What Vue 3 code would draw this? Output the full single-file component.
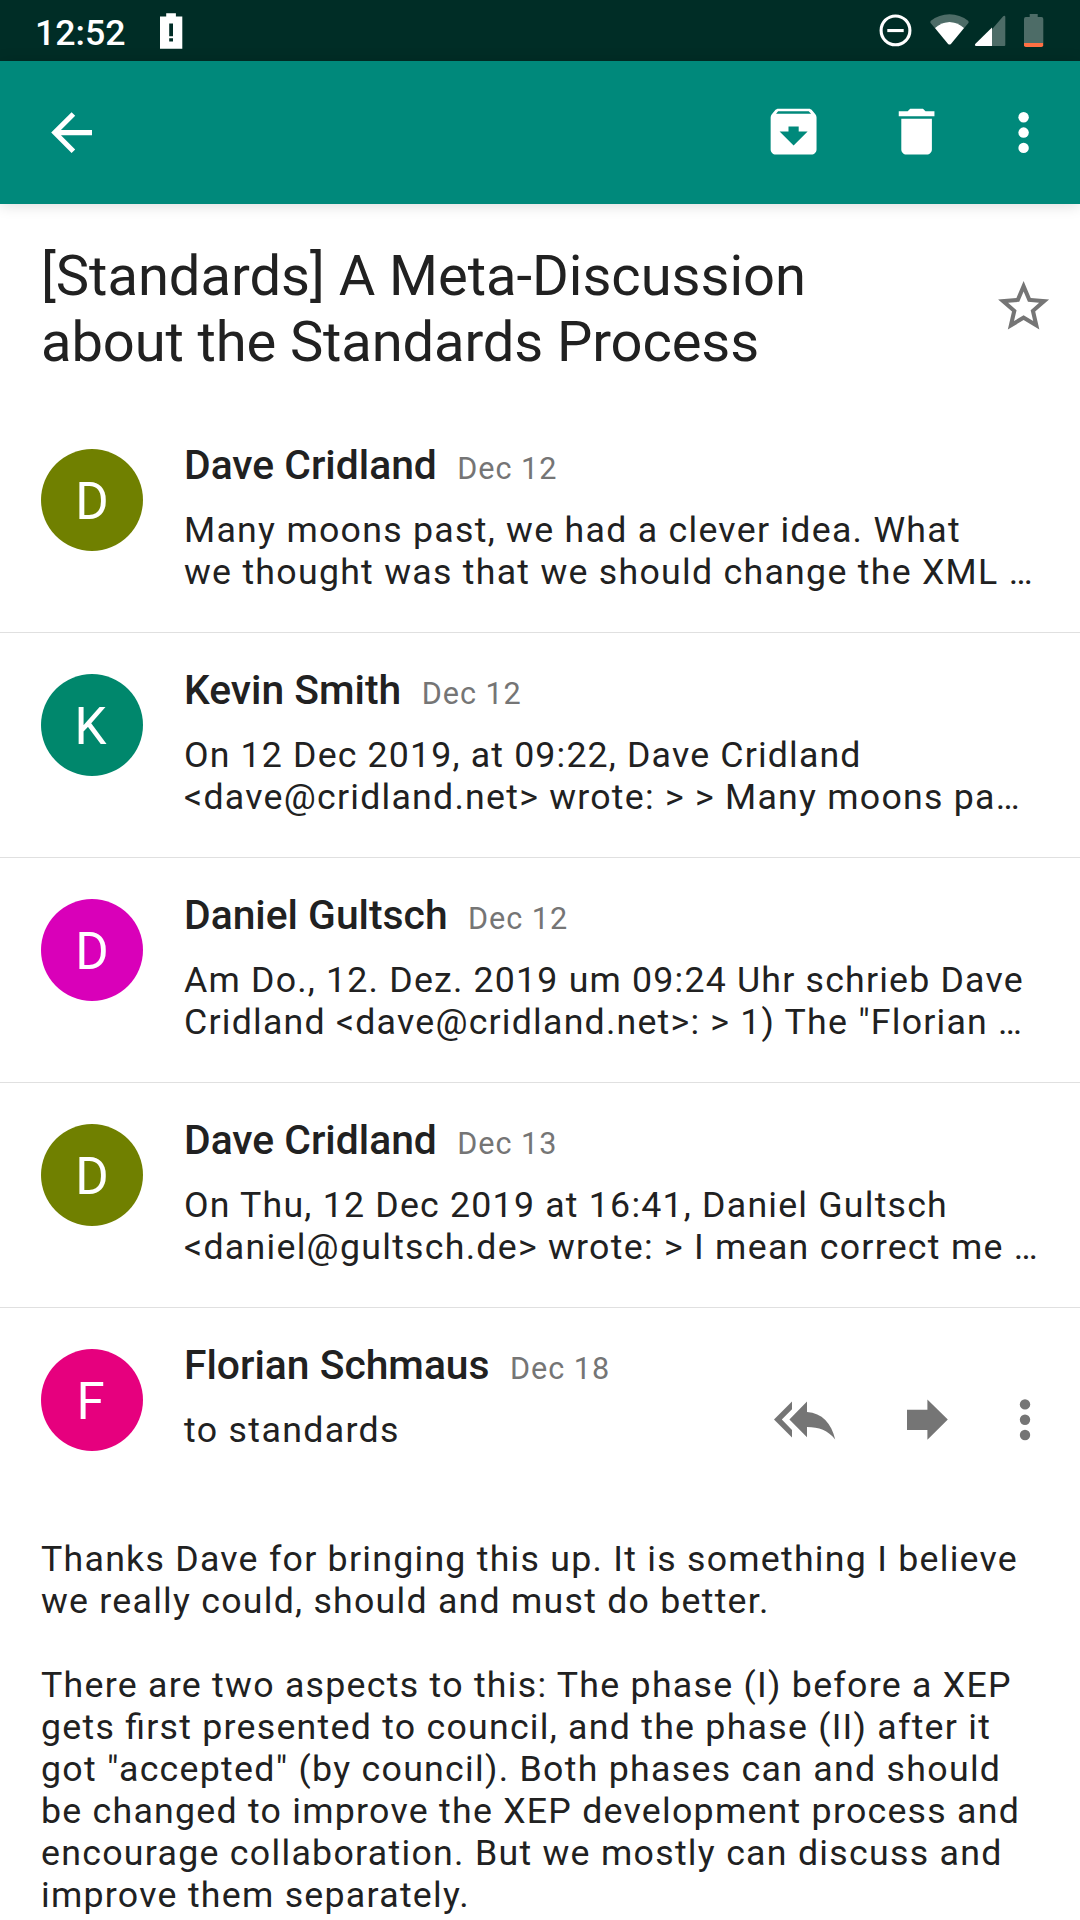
<script setup>
const messages = [
  { id: 1, initial: 'D', color: '#708000', name: 'Dave Cridland', date: 'Dec 12', lines: [
    { text: 'Many moons past, we had a clever idea. What' },
    { text: 'we thought was that we should change the XML …' },
  ] },
  { id: 2, initial: 'K', color: '#00876c', name: 'Kevin Smith', date: 'Dec 12', lines: [
    { text: 'On 12 Dec 2019, at 09:22, Dave Cridland', tracking: 1.165 },
    { text: '<dave@cridland.net> wrote: > > Many moons pa…', tracking: 1.25 },
  ] },
  { id: 3, initial: 'D', color: '#d900b9', name: 'Daniel Gultsch', date: 'Dec 12', lines: [
    { text: 'Am Do., 12. Dez. 2019 um 09:24 Uhr schrieb Dave', tracking: 1.2 },
    { text: 'Cridland <dave@cridland.net>: > 1) The "Florian …', tracking: 1.22 },
  ] },
  { id: 4, initial: 'D', color: '#708000', name: 'Dave Cridland', date: 'Dec 13', lines: [
    { text: 'On Thu, 12 Dec 2019 at 16:41, Daniel Gultsch', tracking: 1.22 },
    { text: '<daniel@gultsch.de> wrote: > I mean correct me …' },
  ] },
  { id: 5, initial: 'F', color: '#e6007e', name: 'Florian Schmaus', date: 'Dec 18', lines: [
    { text: 'to standards', tracking: 1.35 },
  ], open: true },
]

const body = [
  [
    { text: 'Thanks Dave for bringing this up. It is something I believe', tracking: 1.255 },
    { text: 'we really could, should and must do better.', tracking: 1.25 },
  ],
  [
    { text: 'There are two aspects to this: The phase (I) before a XEP' },
    { text: 'gets first presented to council, and the phase (II) after it', tracking: 1.255 },
    { text: 'got "accepted" (by council). Both phases can and should', tracking: 1.29 },
    { text: 'be changed to improve the XEP development process and', tracking: 1.255 },
    { text: 'encourage collaboration. But we mostly can discuss and', tracking: 1.29 },
    { text: 'improve them separately.' },
  ],
]

const track = (line) => ({ letterSpacing: `${line.tracking ?? 1.275}px` })
</script>

<template>
  <div class="screen">
    <div class="status">
      <span class="clock">12:52</span>
      <svg class="alert" width="24" height="37" viewBox="0 0 24 37">
        <path fill="#fff" fill-rule="evenodd" d="M6.2.2h9.7V3.6h6.4v32.2H0V3.6h6.2zM9.2 10.6v12.6h3.8V10.6zM9.2 25.2v3.4h3.8v-3.4z" />
      </svg>
      <svg class="indicators" width="160" height="61" viewBox="0 0 160 61">
        <circle cx="15.5" cy="30.4" r="14.4" fill="none" stroke="#fff" stroke-width="3.1" />
        <path fill="#fff" d="M7.3 29h16.4v3.1H7.3z" />
        <path class="dim" d="M50.9 20.8Q59 14.3 69.5 14.3T88.1 20.8Q89.2 22 88.4 23L84.2 28.1Q77.5 22 69.5 22T54.8 28.1L50.6 23Q49.8 22 50.9 20.8z" />
        <path fill="#fff" d="M54.9 28Q61.5 22 69.5 22T84.1 28L70.9 44q-1.4 1.2-2.8 0z" />
        <path class="dim" d="M112 29.3 123.2 16.2q2.1-1.2 2.1.8v28q0 1-1 1H112z" />
        <path fill="#fff" d="M112 27.5V46H95.8q-1.6-.6-.6-1.9z" />
        <path class="dim" d="M149.7 14h8v3h3.8q1.8.2 1.8 2v24H144V19q0-1.8 1.8-2h3.9z" />
        <path fill="#ff7043" d="M144 43h19.2v2.2q0 1.8-1.8 1.8h-15.6q-1.8 0-1.8-1.8z" />
      </svg>
    </div>

    <header class="appbar">
      <svg class="icon back" viewBox="0 0 24 24"><path d="M20 11H7.83l5.59-5.59L12 4l-8 8 8 8 1.41-1.41L7.83 13H20v-2z" /></svg>
      <svg class="icon raised archive" viewBox="0 0 24 24"><path d="M20.54 5.23l-1.39-1.68C18.88 3.21 18.47 3 18 3H6c-.47 0-.88.21-1.16.55L3.46 5.23C3.17 5.57 3 6.02 3 6.5V19c0 1.1.9 2 2 2h14c1.1 0 2-.9 2-2V6.5c0-.48-.17-.93-.46-1.27zM12 17.5L6.5 12H10v-2h4v2h3.5L12 17.5zM5.12 5l.81-1h12l.94 1H5.12z" /></svg>
      <svg class="icon raised trash" viewBox="0 0 24 24"><path d="M6 19c0 1.1.9 2 2 2h8c1.1 0 2-.9 2-2V7H6v12zM19 4h-3.5l-1-1h-5l-1 1H5v2h14V4z" /></svg>
      <svg class="icon more" viewBox="0 0 24 24"><circle cx="12" cy="6" r="2.05" /><circle cx="12" cy="12" r="2.05" /><circle cx="12" cy="18" r="2.05" /></svg>
    </header>

    <section class="subject">
      <h1><span>[Standards] A Meta-Discussion</span><span class="second">about the Standards Process</span></h1>
      <svg class="icon star" viewBox="0 0 24 24"><path d="M22 9.24l-7.19-.62L12 2 9.19 8.63 2 9.24l5.46 4.73L5.82 21 12 17.27 18.18 21l-1.63-7.03L22 9.24zM12 15.4l-3.76 2.27 1-4.28-3.32-2.88 4.38-.38L12 6.1l1.71 4.04 4.38.38-3.32 2.88 1 4.28L12 15.4z" /></svg>
    </section>

    <article v-for="m in messages" :key="m.id" class="message" :class="{ open: m.open }">
      <div class="avatar" :class="'letter-' + m.initial" :style="{ backgroundColor: m.color }">{{ m.initial }}</div>
      <div class="content">
        <div class="meta">
          <span class="name">{{ m.name }}</span>
          <span class="date">{{ m.date }}</span>
        </div>
        <div class="text">
          <div v-for="line in m.lines" :key="line.text" :style="track(line)">{{ line.text }}</div>
        </div>
      </div>
      <div v-if="m.open" class="actions">
        <svg width="62" height="42" viewBox="0 0 62 42"><path d="M18 2.6v7.6L7.8 20.6 18 31v7.4L0 20.6zM33 2.6v10.3C48 14 57.5 24 61.2 40.5 54 31 45 28 33 27.9v10.4L15.4 20.6z" /></svg>
        <svg width="42" height="42" viewBox="0 0 42 42"><path d="M0 10.7h20.4V.4l20.4 20.2-20.4 20.2V31H0z" /></svg>
        <svg width="12" height="42" viewBox="0 0 12 42"><circle cx="6" cy="5.4" r="5.2" /><circle cx="6" cy="20.7" r="5.2" /><circle cx="6" cy="36" r="5.2" /></svg>
      </div>
    </article>

    <section class="body text">
      <p v-for="(p, i) in body" :key="i">
        <span v-for="line in p" :key="line.text" :style="track(line)">{{ line.text }}</span>
      </p>
    </section>
  </div>
</template>

<style>
body {
  margin: 0;
  background: #fff;
}
</style>

<style scoped>
.screen {
  width: 1080px;
  height: 1920px;
  overflow: hidden;
  display: flex;
  flex-direction: column;
  background: #fff;
  color: #212121;
  font-family: Roboto, "Liberation Sans", sans-serif;
}
.screen > * {
  flex: none;
  box-sizing: border-box;
}
svg {
  display: block;
  flex: none;
}
.status {
  height: 61px;
  display: flex;
  align-items: flex-start;
  background: #002d26;
  color: #fff;
  padding-left: 35px;
}
.clock {
  width: 125px;
  font-size: 35.7px;
  font-weight: 500;
  line-height: 42px;
  padding-top: 12px;
}
.alert {
  margin-top: 13px;
}
.indicators {
  margin-left: auto;
  margin-right: 40px;
  overflow: visible;
}
.dim {
  fill: #4d6c67;
}
.appbar {
  height: 143px;
  display: flex;
  align-items: center;
  padding: 0 26px 0 41px;
  background: #00897b;
  box-shadow: 0 1px 14px rgba(0, 0, 0, 0.15);
}
.icon {
  width: 61.2px;
  height: 61.2px;
}
.appbar .icon {
  fill: #fff;
}
.raised {
  margin-bottom: 2px;
}
.archive {
  margin-left: auto;
}
.trash {
  margin-left: 61.8px;
}
.more {
  margin-left: 45.8px;
}
.subject {
  height: 204px;
  display: flex;
  padding: 39px 26px 0 41px;
}
h1 {
  margin: 0;
  font-size: 56.1px;
  font-weight: 400;
  line-height: 66px;
}
h1 span {
  display: block;
  letter-spacing: -0.03px;
}
h1 .second {
  letter-spacing: -0.12px;
}
.star {
  margin-left: auto;
  margin-top: 33px;
  fill: #757575;
}
.message {
  height: 225px;
  display: flex;
  padding: 33px 0 0 41px;
  border-bottom: 1px solid #e0e0e0;
}
.message.open {
  height: 230px;
  border-bottom: 0;
}
.avatar {
  flex: none;
  box-sizing: border-box;
  width: 102px;
  height: 102px;
  margin-top: 8px;
  margin-right: 41px;
  border-radius: 50%;
  color: #fff;
  font-size: 51px;
  line-height: 106px;
  text-align: center;
}
.letter-K,
.letter-F {
  padding-right: 3px;
}
.meta {
  display: flex;
  align-items: baseline;
  height: 48px;
  line-height: 48px;
  margin-bottom: 20px;
  white-space: nowrap;
}
.name {
  font-size: 40.8px;
  font-weight: 500;
}
.date {
  margin-left: 20.5px;
  font-size: 30.6px;
  letter-spacing: 0.95px;
  color: #757575;
}
.text {
  font-size: 35.7px;
  line-height: 42px;
  white-space: pre;
  font-feature-settings: "liga" 1;
}
.actions {
  display: flex;
  margin-left: auto;
  margin-right: 49.5px;
  padding-top: 58px;
}
.actions svg {
  fill: #757575;
}
.actions svg:nth-child(2) {
  margin-left: 71px;
}
.actions svg:nth-child(3) {
  margin-left: 69.5px;
}
.body {
  padding-left: 41px;
}
.body p {
  margin: 0 0 42px;
}
.body span {
  display: block;
}
</style>
